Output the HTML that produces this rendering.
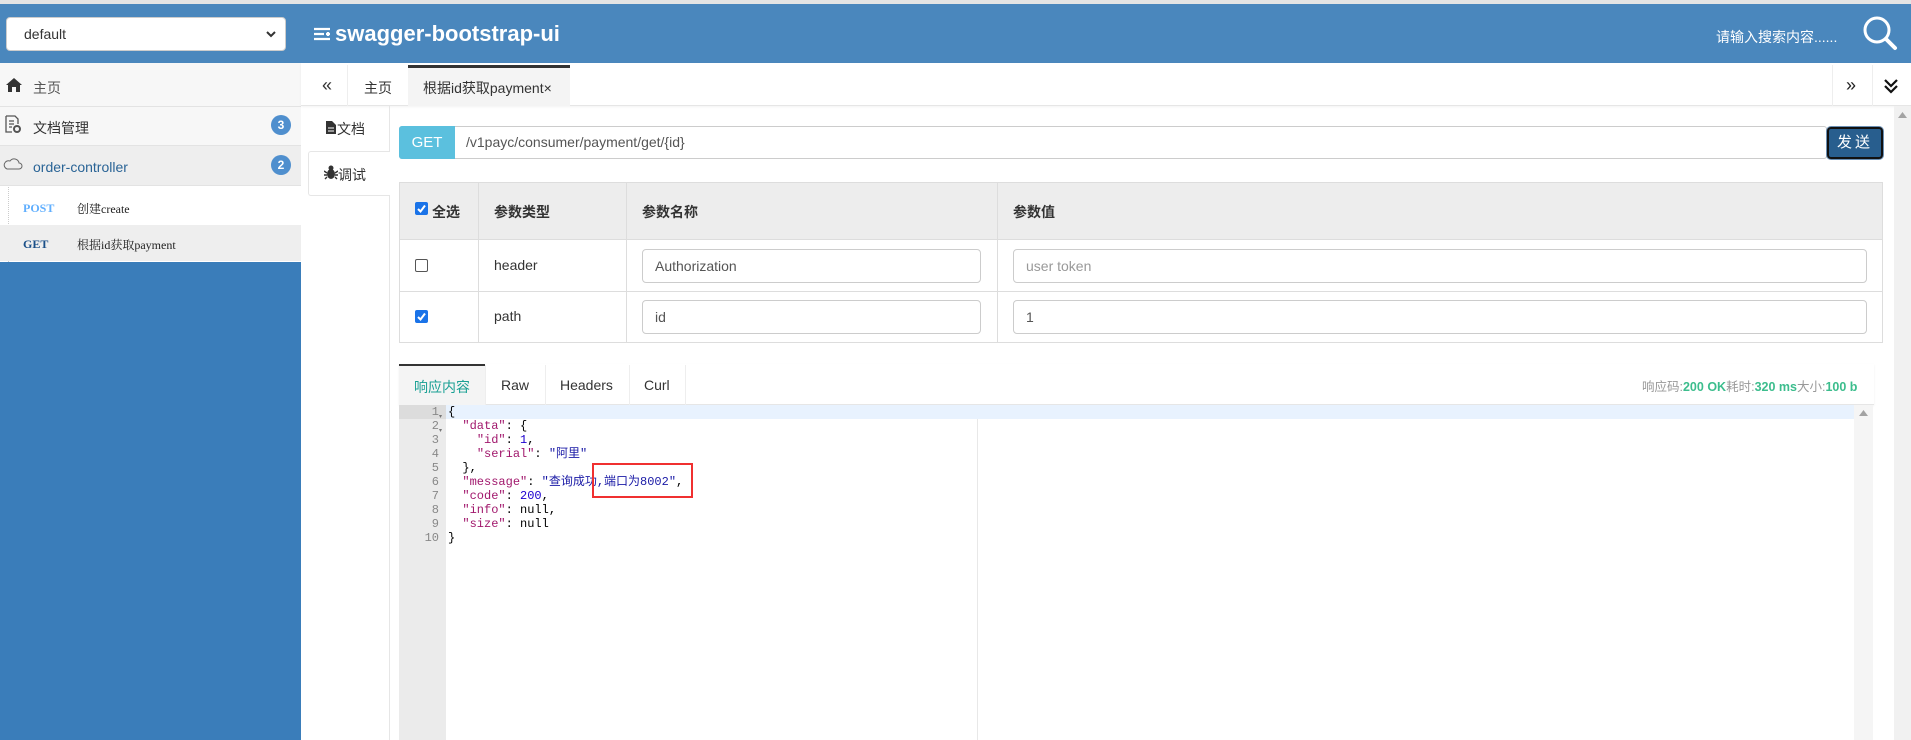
<!DOCTYPE html>
<html><head><meta charset="utf-8"><style>
*{box-sizing:border-box;margin:0;padding:0}
body{width:1911px;height:740px;overflow:hidden;position:relative;background:#fff;font-family:"Liberation Sans","Noto Sans CJK SC",sans-serif;font-size:14px;color:#333}
.a{position:absolute}
.mono{font-family:"Liberation Mono","DejaVu Sans Mono","Noto Sans CJK SC",monospace}
</style></head><body>
<div class="a" style="left:0;top:0;width:1911px;height:4px;background:#e4e4e4"></div>
<div class="a" style="left:0;top:4px;width:1911px;height:59px;background:#4a87bd"></div>
<div class="a" style="left:6px;top:17px;width:280px;height:34px;background:#fff;border:1px solid #ccc;border-radius:4px;padding:8px 0 0 17px;font-size:14px;color:#333">default
<svg class="a" style="right:8px;top:12px" width="12" height="9" viewBox="0 0 12 9"><path d="M2 2 L6 6 L10 2" stroke="#333" stroke-width="2" fill="none"/></svg></div>
<svg class="a" style="left:313px;top:27px" width="18" height="14" viewBox="0 0 18 14"><path d="M1 2H17M1 7H11M1 12H17M13 7H17M15 5V9" stroke="#fff" stroke-width="2.2" fill="none"/></svg>
<div class="a" style="left:335px;top:21px;font-size:22px;font-weight:bold;color:#fff">swagger-bootstrap-ui</div>
<div class="a" style="left:1716px;top:27px;font-size:14px;color:#fff">请输入搜索内容......</div>
<svg class="a" style="left:1862px;top:15px" width="36" height="36" viewBox="0 0 36 36"><circle cx="15" cy="15" r="12" stroke="#fff" stroke-width="3" fill="none"/><path d="M24 24L33 33" stroke="#fff" stroke-width="4" stroke-linecap="round"/></svg>

<div class="a" style="left:0;top:63px;width:301px;height:44px;background:#f7f7f7;border-bottom:1px solid #e3e3e3"></div>
<svg class="a" style="left:5px;top:77px" width="18" height="16" viewBox="0 0 18 16"><path d="M9 1L1 8H3V15H7V10H11V15H15V8H17Z" fill="#333"/></svg>
<div class="a" style="left:33px;top:78px;color:#555">主页</div>
<div class="a" style="left:0;top:107px;width:301px;height:39px;background:#f7f7f7;border-bottom:1px solid #e3e3e3"></div>
<svg class="a" style="left:4px;top:115px" width="18" height="20" viewBox="0 0 18 20"><path d="M2 1H11L14 4V9M2 1V17H8M5 6H10M5 9H10M5 12H8" stroke="#555" stroke-width="1.3" fill="none"/><circle cx="13" cy="14" r="3" stroke="#555" stroke-width="2" fill="none"/></svg>
<div class="a" style="left:33px;top:118px;color:#333;font-size:14px">文档管理</div>
<div class="a" style="left:271px;top:115px;width:20px;height:20px;border-radius:10px;background:#4f8fce;color:#fff;font-size:12px;font-weight:bold;text-align:center;line-height:20px">3</div>
<div class="a" style="left:0;top:146px;width:301px;height:40px;background:#eee;border-bottom:1px solid #e3e3e3"></div>
<svg class="a" style="left:3px;top:158px" width="20" height="12" viewBox="0 0 20 12"><path d="M4 11H16A3 3 0 0 0 16 5A5 5 0 0 0 7 3A4 4 0 0 0 4 11Z" stroke="#666" fill="none"/></svg>
<div class="a" style="left:33px;top:159px;color:#2a6496;font-size:14px">order-controller</div>
<div class="a" style="left:271px;top:155px;width:20px;height:20px;border-radius:10px;background:#4f8fce;color:#fff;font-size:12px;font-weight:bold;text-align:center;line-height:20px">2</div>
<div class="a" style="left:8px;top:187px;width:0;height:75px;border-left:1px dotted #ccc"></div>
<div class="a" style="left:23px;top:201px;font-family:'Liberation Serif',serif;font-weight:bold;font-size:12px;color:#61affe">POST</div>
<div class="a" style="left:77px;top:200px;font-family:'Liberation Serif','Noto Serif CJK SC',serif;font-size:12px;color:#222">创建create</div>
<div class="a" style="left:0;top:225px;width:301px;height:36px;background:#eee"></div>
<div class="a" style="left:23px;top:237px;font-family:'Liberation Serif',serif;font-weight:bold;font-size:12px;color:#1a4f88">GET</div>
<div class="a" style="left:77px;top:236px;font-family:'Liberation Serif','Noto Serif CJK SC',serif;font-size:12px;color:#222">根据id获取payment</div>
<div class="a" style="left:0;top:262px;width:301px;height:478px;background:#3a7dba"></div>

<div class="a" style="left:301px;top:63px;width:1610px;height:43px;background:#fff;border-bottom:1px solid #e6e6e6;box-shadow:0 1px 2px rgba(0,0,0,.05)"></div>
<div class="a" style="left:322px;top:75px;font-size:18px;color:#333">«</div>
<div class="a" style="left:347px;top:65px;width:1px;height:41px;background:#eee"></div>
<div class="a" style="left:364px;top:78px;color:#333">主页</div>
<div class="a" style="left:408px;top:65px;width:162px;height:41px;background:#f4f4f4;border-top:3px solid #333"></div>
<div class="a" style="left:423px;top:78px;color:#333">根据id获取payment×</div>
<div class="a" style="left:1832px;top:65px;width:1px;height:41px;background:#eee"></div>
<div class="a" style="left:1872px;top:65px;width:1px;height:41px;background:#eee"></div>
<div class="a" style="left:1846px;top:75px;font-size:18px;color:#222">»</div>
<svg class="a" style="left:1883px;top:78px" width="16" height="16" viewBox="0 0 16 16"><path d="M2 2L8 8L14 2M2 8L8 14L14 8" stroke="#111" stroke-width="2.2" fill="none"/></svg>

<div class="a" style="left:389px;top:106px;width:1px;height:634px;background:#e6e6e6"></div>
<svg class="a" style="left:326px;top:121px" width="10" height="13" viewBox="0 0 10 13"><path d="M0 0H6L10 4V13H0Z" fill="#333"/><path d="M2 7H8M2 10H8" stroke="#fff"/></svg>
<div class="a" style="left:337px;top:119px;color:#333;font-size:14px">文档</div>
<div class="a" style="left:308px;top:151px;width:82px;height:45px;background:#fff;border:1px solid #e6e6e6;border-right:none;border-radius:3px 0 0 3px"></div>
<svg class="a" style="left:324px;top:165px" width="14" height="15" viewBox="0 0 14 15"><ellipse cx="7" cy="9" rx="4" ry="5" fill="#333"/><circle cx="7" cy="3" r="2.5" fill="#333"/><path d="M0 6L3 8M14 6L11 8M0 10H3M14 10H11M1 14L3 12M13 14L11 12" stroke="#333" stroke-width="1.4"/></svg>
<div class="a" style="left:338px;top:165px;color:#333;font-size:14px">调试</div>

<div class="a" style="left:1894px;top:106px;width:17px;height:634px;background:#f1f1f1"></div>
<svg class="a" style="left:1898px;top:112px" width="9" height="6"><path d="M0 6L4.5 0L9 6Z" fill="#a3a3a3"/></svg>

<div class="a" style="left:399px;top:126px;width:1428px;height:33px;border:1px solid #ccc;border-radius:3px;background:#fff"></div>
<div class="a" style="left:399px;top:126px;width:56px;height:33px;background:#5bc0de;border-radius:3px 0 0 3px;color:#fff;font-size:15px;text-align:center;line-height:33px">GET</div>
<div class="a" style="left:466px;top:134px;color:#555;font-size:14px">/v1payc/consumer/payment/get/{id}</div>
<div class="a" style="left:1827px;top:127px;width:56px;height:32px;background:#285e8e;border:2px solid #111;border-radius:4px;box-shadow:0 0 0 1px #6b8fb3;color:#fff;text-align:center;line-height:28px;font-size:15px;letter-spacing:3px">发送</div>

<div class="a" style="left:399px;top:182px;width:1484px;height:161px;border:1px solid #ddd"></div>
<div class="a" style="left:400px;top:183px;width:1482px;height:57px;background:#ededed;border-bottom:1px solid #ddd"></div>
<div class="a" style="left:400px;top:291px;width:1482px;height:1px;background:#ddd"></div>
<div class="a" style="left:478px;top:183px;width:1px;height:159px;background:#ddd"></div>
<div class="a" style="left:626px;top:183px;width:1px;height:159px;background:#ddd"></div>
<div class="a" style="left:997px;top:183px;width:1px;height:159px;background:#ddd"></div>
<svg class="a" style="left:415px;top:202px" width="13" height="13"><rect width="13" height="13" rx="2" fill="#1a73e8"/><path d="M3 7L5.5 9.5L10 3.5" stroke="#fff" stroke-width="2" fill="none"/></svg>
<div class="a" style="left:432px;top:202px;font-weight:bold;font-size:14px;color:#333">全选</div>
<div class="a" style="left:494px;top:202px;font-weight:bold;font-size:14px;color:#333">参数类型</div>
<div class="a" style="left:642px;top:202px;font-weight:bold;font-size:14px;color:#333">参数名称</div>
<div class="a" style="left:1013px;top:202px;font-weight:bold;font-size:14px;color:#333">参数值</div>
<div class="a" style="left:415px;top:259px;width:13px;height:13px;border:1px solid #555;border-radius:2px;background:#fff"></div>
<div class="a" style="left:494px;top:257px;color:#333">header</div>
<div class="a" style="left:642px;top:249px;width:339px;height:34px;border:1px solid #ccc;border-radius:4px;padding:8px 12px;color:#555">Authorization</div>
<div class="a" style="left:1013px;top:249px;width:854px;height:34px;border:1px solid #ccc;border-radius:4px;padding:8px 12px;color:#999">user token</div>
<svg class="a" style="left:415px;top:310px" width="13" height="13"><rect width="13" height="13" rx="2" fill="#1a73e8"/><path d="M3 7L5.5 9.5L10 3.5" stroke="#fff" stroke-width="2" fill="none"/></svg>
<div class="a" style="left:494px;top:308px;color:#333">path</div>
<div class="a" style="left:642px;top:300px;width:339px;height:34px;border:1px solid #ccc;border-radius:4px;padding:8px 12px;color:#555">id</div>
<div class="a" style="left:1013px;top:300px;width:854px;height:34px;border:1px solid #ccc;border-radius:4px;padding:8px 12px;color:#555">1</div>

<div class="a" style="left:399px;top:364px;width:1475px;height:41px;background:#fff;border-bottom:1px solid #e6e6e6;box-shadow:0 1px 2px rgba(0,0,0,.06)"></div>
<div class="a" style="left:399px;top:364px;width:86px;height:41px;background:#f4f4f4;border-top:2px solid #333"></div>
<div class="a" style="left:414px;top:377px;color:#1aa094;font-size:14px">响应内容</div>
<div class="a" style="left:485px;top:365px;width:1px;height:40px;background:#eee"></div>
<div class="a" style="left:501px;top:377px;color:#333">Raw</div>
<div class="a" style="left:545px;top:365px;width:1px;height:40px;background:#eee"></div>
<div class="a" style="left:560px;top:377px;color:#333">Headers</div>
<div class="a" style="left:629px;top:365px;width:1px;height:40px;background:#eee"></div>
<div class="a" style="left:644px;top:377px;color:#333">Curl</div>
<div class="a" style="left:685px;top:365px;width:1px;height:40px;background:#eee"></div>
<div class="a" style="left:1642px;top:376px;font-size:12.5px;color:#999;white-space:nowrap">响应码:<b style="color:#3cbd8d">200 OK</b>耗时:<b style="color:#3cbd8d">320 ms</b>大小:<b style="color:#3cbd8d">100 b</b></div>

<div class="a" style="left:399px;top:405px;width:47px;height:335px;background:#ebebeb"></div>
<div class="a" style="left:399px;top:405px;width:47px;height:14px;background:#dcdcdc"></div>
<div class="a" style="left:446px;top:405px;width:1408px;height:14px;background:#e8f2fe"></div>
<div class="a" style="left:977px;top:419px;width:1px;height:321px;background:#e8e8e8"></div>
<div class="a" style="left:1854px;top:405px;width:19px;height:335px;background:#f5f5f5"></div>
<svg class="a" style="left:1859px;top:410px" width="9" height="6"><path d="M0 6L4.5 0L9 6Z" fill="#a3a3a3"/></svg>
<div class="a mono" style="left:399px;top:405px;width:40px;text-align:right;font-size:12px;line-height:14px;color:#888;white-space:pre">1
2
3
4
5
6
7
8
9
10</div>
<div class="a" style="left:439px;top:410px;font-size:6px;color:#777;line-height:14px">▾<br>▾</div>
<div class="a mono" style="left:448px;top:405px;font-size:12px;line-height:14px;color:#000;white-space:pre">{
  <span style="color:#a1176c">"data"</span>: {
    <span style="color:#a1176c">"id"</span>: <span style="color:#1c00cf">1</span>,
    <span style="color:#a1176c">"serial"</span>: <span style="color:#1a1aa6">"阿里"</span>
  },
  <span style="color:#a1176c">"message"</span>: <span style="color:#1a1aa6">"查询成功,端口为8002"</span>,
  <span style="color:#a1176c">"code"</span>: <span style="color:#1c00cf">200</span>,
  <span style="color:#a1176c">"info"</span>: null,
  <span style="color:#a1176c">"size"</span>: null
}</div>
<div class="a" style="left:592px;top:463px;width:101px;height:35px;border:2px solid #f03030"></div>
</body></html>
